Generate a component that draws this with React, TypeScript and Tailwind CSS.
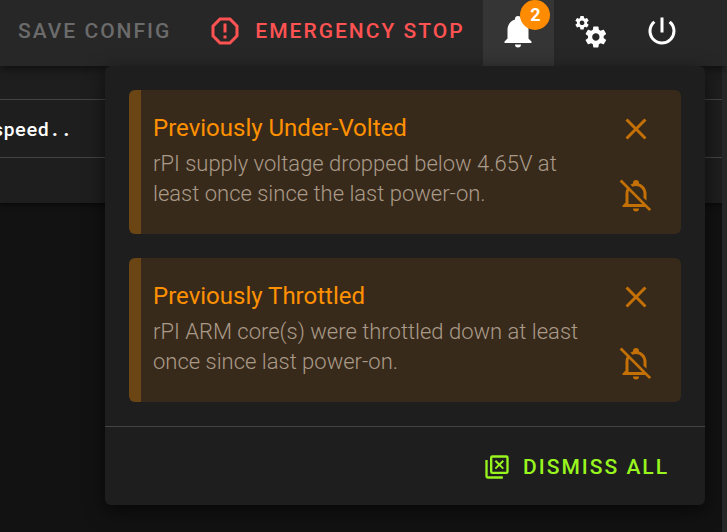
import { useState } from 'react'
import type { ReactNode } from 'react'

type Notification = {
  id: string
  title: string
  description: string
}

const INITIAL: Notification[] = [
  {
    id: 'under-volted',
    title: 'Previously Under-Volted',
    description: 'rPI supply voltage dropped below 4.65V at least once since the last power-on.',
  },
  {
    id: 'throttled',
    title: 'Previously Throttled',
    description: 'rPI ARM core(s) were throttled down at least once since last power-on.',
  },
]

const ICONS = {
  alert: 'M8.27,3L3,8.27V15.73L8.27,21H15.73C17.5,19.24 21,15.73 21,15.73V8.27L15.73,3M9.1,5H14.9L19,9.1V14.9L14.9,19H9.1L5,14.9V9.1M11,15H13V17H11V15M11,7H13V13H11V7',
  bell: 'M21,19V20H3V19L5,17V11C5,7.9 7.03,5.17 10,4.29C10,4.19 10,4.1 10,4A2,2 0 0,1 12,2A2,2 0 0,1 14,4C14,4.1 14,4.19 14,4.29C16.97,5.17 19,7.9 19,11V17L21,19M14,21A2,2 0 0,1 12,23A2,2 0 0,1 10,21',
  cogs: 'M15.9,18.45C17.25,18.45 18.35,17.35 18.35,16C18.35,14.65 17.25,13.55 15.9,13.55C14.54,13.55 13.45,14.65 13.45,16C13.45,17.35 14.54,18.45 15.9,18.45M21.1,16.68L22.58,17.84C22.71,17.95 22.75,18.13 22.66,18.29L21.26,20.71C21.17,20.86 21,20.92 20.83,20.86L19.09,20.16C18.73,20.44 18.33,20.67 17.91,20.85L17.64,22.7C17.62,22.87 17.47,23 17.3,23H14.5C14.32,23 14.18,22.87 14.15,22.7L13.89,20.85C13.46,20.67 13.07,20.44 12.71,20.16L10.96,20.86C10.81,20.92 10.62,20.86 10.54,20.71L9.14,18.29C9.05,18.13 9.09,17.95 9.22,17.84L10.7,16.68L10.65,16L10.7,15.31L9.22,14.16C9.09,14.05 9.05,13.86 9.14,13.71L10.54,11.29C10.62,11.13 10.81,11.07 10.96,11.13L12.71,11.84C13.07,11.56 13.46,11.32 13.89,11.15L14.15,9.29C14.18,9.13 14.32,9 14.5,9H17.3C17.47,9 17.62,9.13 17.64,9.29L17.91,11.15C18.33,11.32 18.73,11.56 19.09,11.84L20.83,11.13C21,11.07 21.17,11.13 21.26,11.29L22.66,13.71C22.75,13.86 22.71,14.05 22.58,14.16L21.1,15.31L21.15,16L21.1,16.68M6.69,8.07C7.56,8.07 8.26,7.37 8.26,6.5C8.26,5.63 7.56,4.92 6.69,4.92A1.58,1.58 0 0,0 5.11,6.5C5.11,7.37 5.82,8.07 6.69,8.07M10.03,6.94L11,7.68C11.07,7.75 11.09,7.87 11.03,7.97L10.13,9.53C10.08,9.63 9.96,9.67 9.86,9.63L8.74,9.18L8,9.62L7.81,10.81C7.79,10.92 7.7,11 7.59,11H5.79C5.67,11 5.58,10.92 5.56,10.81L5.4,9.62L4.64,9.18L3.52,9.63C3.41,9.67 3.3,9.63 3.24,9.53L2.34,7.97C2.28,7.87 2.31,7.75 2.39,7.68L3.34,6.94L3.31,6.5L3.34,6.06L2.39,5.32C2.31,5.25 2.28,5.13 2.34,5.03L3.24,3.47C3.3,3.37 3.41,3.33 3.52,3.37L4.63,3.82L5.4,3.38L5.56,2.19C5.58,2.08 5.67,2 5.79,2H7.59C7.7,2 7.79,2.08 7.81,2.19L8,3.38L8.74,3.82L9.86,3.37C9.96,3.33 10.08,3.37 10.13,3.47L11.03,5.03C11.09,5.13 11.07,5.25 11,5.32L10.03,6.06L10.06,6.5L10.03,6.94Z',
  power: 'M13,3H11V13H13V3M17.83,5.17L16.41,6.59C18.05,7.91 19,9.9 19,12A7,7 0 0,1 12,19C8.14,19 5,15.88 5,12C5,9.91 5.95,7.91 7.58,6.58L6.17,5.17C2.38,8.39 1.92,14.07 5.14,17.86C8.36,21.64 14.04,22.1 17.83,18.88C19.85,17.17 21,14.65 21,12C21,9.37 19.84,6.87 17.83,5.17',
  close: 'M19,6.41L17.59,5L12,10.59L6.41,5L5,6.41L10.59,12L5,17.59L6.41,19L12,13.41L17.59,19L19,17.59L13.41,12L19,6.41Z',
  bellOff: 'M22.11,21.46L2.39,1.73L1.11,3L5.83,7.72C5.29,8.73 5,9.86 5,11V17L3,19V20H18.11L20.84,22.73L22.11,21.46M7,18V11C7,10.39 7.11,9.79 7.34,9.23L16.11,18H7M10,21H14A2,2 0 0,1 12,23A2,2 0 0,1 10,21M8.29,5.09C8.82,4.75 9.4,4.48 10,4.29C10,4.19 10,4.1 10,4A2,2 0 0,1 12,2A2,2 0 0,1 14,4C14,4.1 14,4.19 14,4.29C16.97,5.17 19,7.9 19,11V15.8L17,13.8V11A5,5 0 0,0 12,6C11.22,6 10.45,6.2 9.76,6.56L8.29,5.09Z',
  closeMultiple: 'M20,16V4H8V16H20M22,16A2,2 0 0,1 20,18H8A2,2 0 0,1 6,16V4A2,2 0 0,1 8,2H20A2,2 0 0,1 22,4V16M17,20V22H4A2,2 0 0,1 2,20V6H4V20H17M10,7.2L11.2,6L14,8.8L16.8,6L18,7.2L15.2,10L18,12.8L16.8,14L14,11.2L11.2,14L10,12.8L12.8,10L10,7.2Z',
}

function Icon({ name, className }: { name: keyof typeof ICONS; className: string }) {
  return (
    <svg viewBox="0 0 24 24" fill="currentColor" aria-hidden="true" className={`flex-shrink-0 ${className}`}>
      <path d={ICONS[name]} />
    </svg>
  )
}

export default function App() {
  const [items, setItems] = useState<Notification[]>(INITIAL)
  const [open, setOpen] = useState(true)

  const remove = (id: string) => setItems(list => list.filter(n => n.id !== id))

  return (
    <div className="flex flex-col min-h-screen overflow-hidden bg-[#121212] text-white font-[Roboto,sans-serif]">
      <header className="relative z-10 flex items-center justify-end h-[66px] pr-[29px] bg-[#272727] shadow-[0_3px_8px_rgba(0,0,0,0.5)]">
        <div className="flex items-center h-full pb-1">
          <button
            type="button"
            disabled
            className="px-[18px] text-[21px] leading-8 font-medium tracking-[2px] text-[#6b6b6b] whitespace-nowrap"
          >
            SAVE CONFIG
          </button>
          <button
            type="button"
            className="flex items-center gap-3 px-[18px] text-[21px] leading-8 font-medium tracking-[2px] text-[#ff5252] whitespace-nowrap"
          >
            <Icon name="alert" className="size-9" />
            EMERGENCY STOP
          </button>
        </div>
        <BarButton label="Notifications" active={open} onClick={() => setOpen(o => !o)}>
          <Icon name="bell" className="size-9" />
          {items.length > 0 && (
            <span className="absolute top-0 right-1 flex items-center justify-center size-[30px] rounded-full bg-[#ff8c00] text-lg font-bold">
              {items.length}
            </span>
          )}
        </BarButton>
        <BarButton label="Interface settings">
          <Icon name="cogs" className="size-9" />
        </BarButton>
        <BarButton label="Power">
          <Icon name="power" className="size-9" />
        </BarButton>

        {open && (
          <section
            aria-label="Notifications"
            className="absolute top-full right-[22px] w-full max-w-[600px] rounded-md bg-[#1e1e1e] shadow-[0_6px_20px_rgba(0,0,0,0.6)]"
          >
            <ul className="flex flex-col gap-6 p-6">
              {items.map(n => (
                <NotificationCard key={n.id} item={n} onClose={() => remove(n.id)} />
              ))}
            </ul>
            <div className="flex justify-end px-9 pt-[25px] pb-[23px] border-t border-[#444444]">
              <button
                type="button"
                onClick={() => setItems([])}
                className="flex items-center gap-3 text-[21px] leading-[30px] font-medium tracking-[2px] text-[#99f51e]"
              >
                <Icon name="closeMultiple" className="size-7" />
                DISMISS ALL
              </button>
            </div>
          </section>
        )}
      </header>

      {/* Page behind the menu */}
      <main className="flex flex-1">
        <div className="flex-1 min-w-0">
          <div className="pt-[33px] pb-[45px] bg-[#1e1e1e] shadow-[0_2px_4px_rgba(0,0,0,0.5)]">
            <p className="-ml-2 py-[14px] border-y border-[#444444] text-[19px] leading-[29px] font-medium font-['Roboto_Mono','DejaVu_Sans_Mono',monospace]">
              speed..
            </p>
          </div>
        </div>
        <div className="w-[5px] bg-[#272727]" />
      </main>
    </div>
  )
}

type BarButtonProps = {
  label: string
  active?: boolean
  onClick?: () => void
  children: ReactNode
}

function BarButton({ label, active = false, onClick, children }: BarButtonProps) {
  return (
    <button
      type="button"
      aria-label={label}
      onClick={onClick}
      className={`relative flex items-center justify-center w-[72px] h-full pb-1 ${active ? 'bg-[#353535]' : ''}`}
    >
      {children}
    </button>
  )
}

function NotificationCard({ item, onClose }: { item: Notification; onClose: () => void }) {
  return (
    <li className="flex justify-between min-h-36 border-l-[12px] border-[#6b4513] rounded-md bg-[#382a1b]">
      <div className="flex-1 min-w-0 pl-3 pr-6 pt-6 pb-5">
        <h2 className="text-2xl leading-7 text-[#ff9100]">{item.title}</h2>
        <p className="mt-[7px] text-[22px] leading-[30px] font-light text-[#aa9a89]">{item.description}</p>
      </div>
      <div className="flex flex-col justify-between items-center pr-[27px] py-[21px] text-[#c37007]">
        <button type="button" aria-label={`Close ${item.title}`} onClick={onClose}>
          <Icon name="close" className="size-9" />
        </button>
        <button type="button" aria-label={`Mute ${item.title}`}>
          <Icon name="bellOff" className="size-9" />
        </button>
      </div>
    </li>
  )
}
